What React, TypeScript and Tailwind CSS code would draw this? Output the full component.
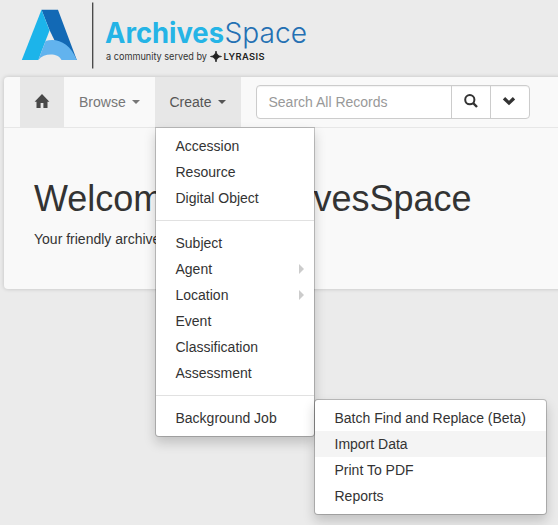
import React from "react";

function Logo() {
  return (
    <svg width="320" height="77" viewBox="0 0 320 77" className="block" role="img" aria-label="ArchivesSpace">
      <path d="M41.500 9.700H58L76.800 60H64L49.500 30Z" fill="#1269b5" />
      <path d="M41.500 9.700L49.500 30.500L38.300 60H21.800Z" fill="#1cb4ea" />
      <path d="M45.600 41C57 37.500 70 43 76.800 60H61.500C58 52.800 44 52.800 38.300 60Z" fill="#62b3ee" />
      <path d="M92.700 2.500V68.500" stroke="#444" strokeWidth="1.300" />
      <text x="105" y="42.500" textLength="119" lengthAdjust="spacingAndGlyphs" fontSize="28" fontWeight="700" fill="#25b4e6" fontFamily="Inter, sans-serif">Archives</text>
      <text x="224.500" y="42.500" textLength="82.500" lengthAdjust="spacingAndGlyphs" fontSize="28" fontWeight="300" fill="#2470b3" fontFamily="Inter, sans-serif">Space</text>
      <text x="106" y="60" textLength="101" lengthAdjust="spacingAndGlyphs" fontSize="10" fill="#333" fontFamily="Inter, sans-serif">a community served by</text>
      <path d="M216 51Q216.600 55.900 221.500 56.500Q216.600 57.100 216 62Q215.400 57.100 210.500 56.500Q215.400 55.900 216 51Z" fill="#222" stroke="#222" strokeWidth=".8" />
      <text x="223.500" y="60" textLength="41" lengthAdjust="spacing" fontSize="9.300" fontWeight="600" fill="#222" fontFamily="Inter, sans-serif">LYRASIS</text>
    </svg>
  );
}

function Caret() {
  return <span className="ml-1.5 inline-block border-x-4 border-t-4 border-x-transparent border-t-current align-middle" />;
}

function MenuItem({ label, sub, active }: { label: string; sub?: boolean; active?: boolean }) {
  return (
    <li className={`flex h-[26px] items-center justify-between pl-[19.5px] pr-2.5 ${active ? "bg-[#f4f4f4]" : ""}`}>
      <span className="whitespace-nowrap">{label}</span>
      {sub && <span className="border-y-5 border-l-5 border-y-transparent border-l-[#ccc]" />}
    </li>
  );
}

const Divider = () => <li className="my-[9px] h-px bg-[#e1e1e1]" />;

const menuBox = "absolute rounded-[4px] border border-black/20 bg-white bg-clip-padding py-[5px] text-[#333] shadow-[0_6px_12px_rgba(0,0,0,0.175)]";

export default function App() {
  return (
    <div className="h-[525px] w-[558px] overflow-hidden bg-[#ebebeb] font-['Liberation_Sans',Arial,sans-serif] text-[14px] leading-5 text-[#333]">
      <header className="h-[77px]">
        <Logo />
      </header>
      <main className="ml-1 h-[212px] w-[580px] rounded-[4px] bg-[#f9f9f9] shadow-[0_0_4px_rgba(0,0,0,0.18)]">
        <nav className="flex h-[51px] border-b border-[#e7e7e7] pl-4 text-[#777]">
          <a className="flex w-11 items-center justify-center bg-[#e7e7e7] pb-0.5 text-[#484848]">
            <svg width="16" height="16" viewBox="0 0 16 16" fill="currentColor">
              <path d="M8 1L.6 8.700H2.500V15H6.600V10H9.400V15H13.500V8.700H15.400L8 1Z" />
            </svg>
          </a>
          <a className="flex w-[91px] items-center pl-[15px]">Browse<Caret /></a>
          <div className="relative w-[86px] bg-[#e7e7e7] text-[#555]">
            <a className="flex h-[50px] items-center pl-[14.5px]">Create<Caret /></a>
            <ul className={`${menuBox} left-0 top-[50px] z-10 w-40 rounded-t-none`}>
              <MenuItem label="Accession" />
              <MenuItem label="Resource" />
              <MenuItem label="Digital Object" />
              <Divider />
              <MenuItem label="Subject" />
              <MenuItem label="Agent" sub />
              <MenuItem label="Location" sub />
              <MenuItem label="Event" />
              <MenuItem label="Classification" />
              <MenuItem label="Assessment" />
              <Divider />
              <MenuItem label="Background Job" />
              <li>
                <ul className={`${menuBox} left-[158px] top-[271px] w-[233px]`}>
                  <MenuItem label="Batch Find and Replace (Beta)" />
                  <MenuItem label="Import Data" active />
                  <MenuItem label="Print To PDF" />
                  <MenuItem label="Reports" />
                </ul>
              </li>
            </ul>
          </div>
          <form className="ml-[15px] mt-2 flex h-[34px] w-[274px] rounded-[4px] border border-[#ccc] bg-white shadow-[inset_0_1px_1px_rgba(0,0,0,0.05)]">
            <span className="flex w-[194px] items-center pl-[11.5px] text-[#999]">Search All Records</span>
            <button type="button" className="flex w-[39px] items-center justify-center border-l border-[#ccc] pb-0.5 text-[#333]">
              <svg width="14" height="14" viewBox="0 0 14 14" fill="none" stroke="currentColor">
                <circle cx="5.800" cy="5.700" r="4.600" strokeWidth="2" />
                <path d="M9.200 9.200L13 13" strokeWidth="2.400" />
              </svg>
            </button>
            <button type="button" className="flex flex-1 items-center justify-center border-l border-[#ccc] pb-0.5 pr-0.5 text-[#333]">
              <svg width="14" height="10" viewBox="0 0 14 10" fill="none" stroke="currentColor" strokeWidth="3.300">
                <path d="M2 2.200L7 7L12 2.200" />
              </svg>
            </button>
          </form>
        </nav>
        <div className="pl-[30px] pt-[51px]">
          <h1 className="whitespace-nowrap text-[36px] leading-10">Welcome to ArchivesSpace</h1>
          <p className="mt-[10px]">Your friendly archives management tool.</p>
        </div>
      </main>
    </div>
  );
}
